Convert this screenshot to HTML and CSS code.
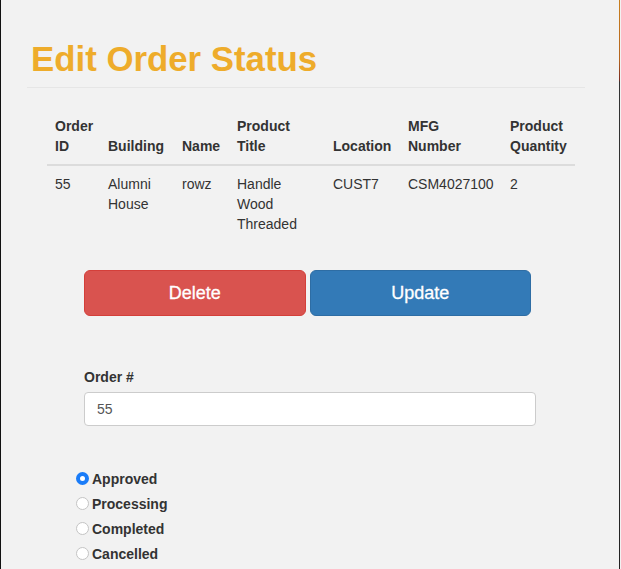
FILE: index.html
```html
<!DOCTYPE html>
<html>
<head>
<meta charset="utf-8">
<title>Edit Order Status</title>
<link rel="stylesheet" href="styles.css">
</head>
<body>
<div class="page">
  <h1 class="title">Edit Order Status</h1>
  <hr class="rule">
  <table class="orders">
    <colgroup>
      <col class="c-id"><col class="c-bld"><col class="c-name"><col class="c-title"><col class="c-loc"><col class="c-mfg"><col class="c-qty">
    </colgroup>
    <thead>
      <tr>
        <th>Order ID</th>
        <th>Building</th>
        <th>Name</th>
        <th>Product Title</th>
        <th>Location</th>
        <th>MFG Number</th>
        <th>Product Quantity</th>
      </tr>
    </thead>
    <tbody>
      <tr>
        <td>55</td>
        <td>Alumni House</td>
        <td>rowz</td>
        <td>Handle Wood Threaded</td>
        <td>CUST7</td>
        <td>CSM4027100</td>
        <td>2</td>
      </tr>
    </tbody>
  </table>
  <div class="actions">
    <button class="btn btn-delete" type="button">Delete</button>
    <button class="btn btn-update" type="button">Update</button>
  </div>
  <div class="field">
    <label class="field-label" for="order">Order #</label>
    <input class="field-input" id="order" type="text" value="55">
  </div>
  <div class="statuses">
    <label class="status"><input type="radio" name="status" checked><span>Approved</span></label>
    <label class="status"><input type="radio" name="status"><span>Processing</span></label>
    <label class="status"><input type="radio" name="status"><span>Completed</span></label>
    <label class="status"><input type="radio" name="status"><span>Cancelled</span></label>
  </div>
</div>
</body>
</html>
```
FILE: styles.css
```css
html, body {
  margin: 0;
  padding: 0;
}
body {
  width: 621px;
  height: 569px;
  overflow: hidden;
  background-color: #f2f2f2;
  background-image:
    linear-gradient(#111, #111),
    linear-gradient(#c9801f 0, #b4641e 60px, #7a2a20 80px, #333 82px, #222 100%);
  background-size: 1px 100%, 1px 100%;
  background-position: 0 0, 619px 0;
  background-repeat: no-repeat;
  font-family: "Liberation Sans", Arial, Helvetica, sans-serif;
  font-size: 14px;
  line-height: 20px;
  color: #333;
}
.page {
  padding: 40px 0 0 27px;
  width: 558px;
}
.title {
  margin: 0 0 9px 0;
  padding-left: 4px;
  font-size: 34.8px;
  line-height: 38px;
  font-weight: bold;
  color: #eeac2b;
}
.rule {
  margin: 0;
  border: 0;
  border-top: 1px solid #e6e6e6;
  height: 0;
}
.orders {
  margin: 20px 0 0 20px;
  width: 528px;
  border-collapse: collapse;
  table-layout: fixed;
}
.c-id { width: 53px; }
.c-bld { width: 74px; }
.c-name { width: 55px; }
.c-title { width: 96px; }
.c-loc { width: 75px; }
.c-mfg { width: 102px; }
.c-qty { width: 73px; }
.orders th {
  text-align: left;
  vertical-align: bottom;
  font-weight: bold;
  padding: 8px;
  border-bottom: 2px solid #dcdcdc;
}
.orders td {
  vertical-align: top;
  padding: 8px;
}
.actions {
  display: flex;
  gap: 4px;
  margin: 28px 0 0 57px;
  width: 447px;
}
.btn {
  flex: 1;
  height: 46px;
  padding: 10px 16px;
  font-family: "Liberation Sans", Arial, Helvetica, sans-serif;
  font-size: 18px;
  line-height: 24px;
  color: #fff;
  border-radius: 6px;
  border: 1px solid transparent;
  cursor: pointer;
  -webkit-text-stroke: 0.3px #fff;
}
.btn-delete {
  background: #d9534f;
  border-color: #d43f3a;
}
.btn-update {
  background: #337ab7;
  border-color: #2e6da4;
}
.field {
  margin: 51px 0 0 57px;
  width: 452px;
}
.field-label {
  display: block;
  font-weight: bold;
  margin-bottom: 5px;
}
.field-input {
  display: block;
  box-sizing: border-box;
  width: 452px;
  height: 34px;
  padding: 6px 12px;
  font-family: "Liberation Sans", Arial, Helvetica, sans-serif;
  font-size: 14px;
  color: #555;
  background: #fff;
  border: 1px solid #ccc;
  border-radius: 4px;
}
.statuses {
  margin: 40px 0 0 49px;
  display: flex;
  flex-direction: column;
}
.status {
  display: flex;
  align-items: center;
  height: 25px;
  font-weight: bold;
}
.status input {
  appearance: none;
  -webkit-appearance: none;
  box-sizing: border-box;
  width: 13px;
  height: 13px;
  margin: 0 3px 0 0;
  border-radius: 50%;
  border: 1px solid #c4c4c4;
  background: #fff;
}
.status input:checked {
  border: 4px solid #1a7cf8;
  background: #fff;
}
```
